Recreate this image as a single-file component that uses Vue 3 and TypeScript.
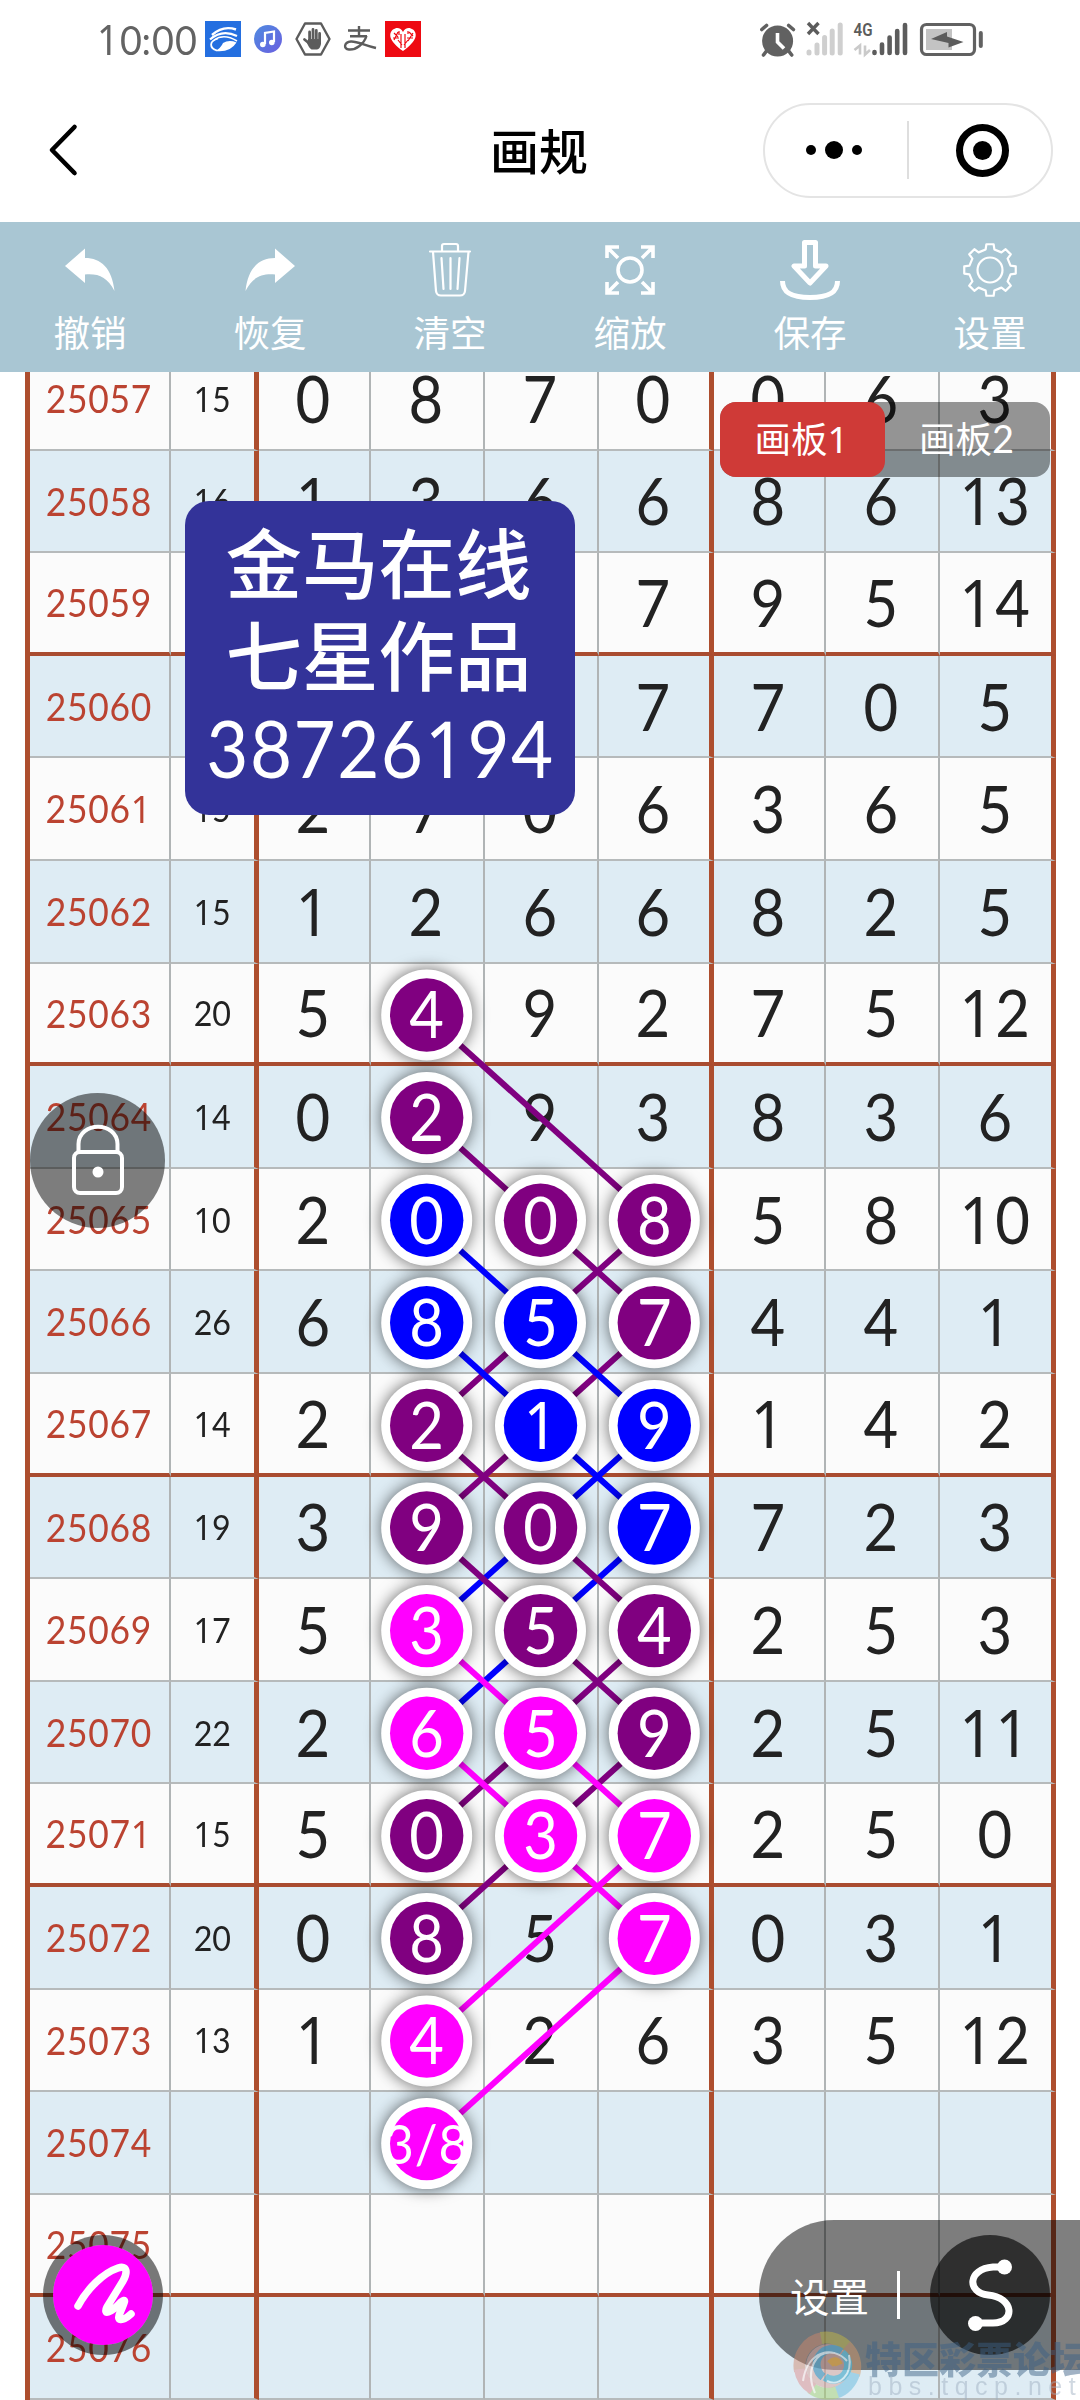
<script setup lang="ts">
interface Row {
  issue: string
  sum: string
  digits: string[]
}

const source: [string, string, string][] = [
  ['25057', '15', '0 8 7 0 0 6 3'],
  ['25058', '16', '1 3 6 6 8 6 13'],
  ['25059', '', '7 9 5 14'],
  ['25060', '', '7 7 0 5'],
  ['25061', '15', '2 7 0 6 3 6 5'],
  ['25062', '15', '1 2 6 6 8 2 5'],
  ['25063', '20', '5 4 9 2 7 5 12'],
  ['25064', '14', '0 2 9 3 8 3 6'],
  ['25065', '10', '2 0 0 8 5 8 10'],
  ['25066', '26', '6 8 5 7 4 4 1'],
  ['25067', '14', '2 2 1 9 1 4 2'],
  ['25068', '19', '3 9 0 7 7 2 3'],
  ['25069', '17', '5 3 5 4 2 5 3'],
  ['25070', '22', '2 6 5 9 2 5 11'],
  ['25071', '15', '5 0 3 7 2 5 0'],
  ['25072', '20', '0 8 5 7 0 3 1'],
  ['25073', '13', '1 4 2 6 3 5 12'],
  ['25074', '', ''],
  ['25075', '', ''],
  ['25076', '', ''],
]

// A board mark covers the digit below it, so those cells stay empty.
const covered = new Set<string>()

const PURPLE = '#800080'
const BLUE = '#0000ff'
const PINK = '#ff00ff'

interface Mark { issue: number; col: number; text: string; color: string }
const marks: Mark[] = [
  [63, 2, '4', PURPLE], [64, 2, '2', PURPLE],
  [65, 2, '0', BLUE], [65, 3, '0', PURPLE], [65, 4, '8', PURPLE],
  [66, 2, '8', BLUE], [66, 3, '5', BLUE], [66, 4, '7', PURPLE],
  [67, 2, '2', PURPLE], [67, 3, '1', BLUE], [67, 4, '9', BLUE],
  [68, 2, '9', PURPLE], [68, 3, '0', PURPLE], [68, 4, '7', BLUE],
  [69, 2, '3', PINK], [69, 3, '5', PURPLE], [69, 4, '4', PURPLE],
  [70, 2, '6', PINK], [70, 3, '5', PINK], [70, 4, '9', PURPLE],
  [71, 2, '0', PURPLE], [71, 3, '3', PINK], [71, 4, '7', PINK],
  [72, 2, '8', PURPLE], [72, 4, '7', PINK],
  [73, 2, '4', PINK], [74, 2, '3/8', PINK],
].map(([issue, col, text, color]) => ({ issue, col, text, color }) as Mark)

for (const m of marks) covered.add(`250${m.issue}-${m.col}`)

const rows: Row[] = source.map(([issue, sum, line]) => {
  const parts = line ? line.split(' ') : []
  const digits = [...Array(7 - parts.length).fill(''), ...parts]
  return { issue, sum, digits: digits.map((d, i) => (covered.has(`${issue}-${i + 1}`) ? '' : d)) }
})

const links: [number, number, number, number, string][] = [
  [65, 4, 66, 3, PURPLE], [66, 3, 67, 2, PURPLE], [66, 4, 67, 3, PURPLE], [67, 3, 68, 2, PURPLE],
  [65, 2, 66, 3, BLUE], [66, 3, 67, 4, BLUE], [66, 2, 67, 3, BLUE], [67, 3, 68, 4, BLUE],
  [67, 4, 68, 3, BLUE], [68, 3, 69, 2, BLUE], [68, 4, 69, 3, BLUE], [69, 3, 70, 2, BLUE],
  [63, 2, 65, 4, PURPLE], [64, 2, 65, 3, PURPLE], [65, 3, 66, 4, PURPLE], [67, 2, 68, 3, PURPLE],
  [68, 3, 69, 4, PURPLE], [68, 2, 69, 3, PURPLE], [69, 3, 70, 4, PURPLE], [69, 4, 70, 3, PURPLE],
  [70, 3, 71, 2, PURPLE], [70, 4, 71, 3, PURPLE], [71, 3, 72, 2, PURPLE],
  [69, 2, 70, 3, PINK], [70, 3, 71, 4, PINK], [70, 2, 71, 3, PINK], [71, 3, 72, 4, PINK],
  [71, 4, 73, 2, PINK], [72, 4, 74, 2, PINK],
]

const px = (col: number) => 426.7 + (col - 2) * 113.8
const py = (issue: number) => 27.4 + (issue - 57) * 102.6

const tools = ['撤销', '恢复', '清空', '缩放', '保存', '设置']
const gearPath = (() => {
  const pts: string[] = []
  const at = (r: number, deg: number) => {
    const a = (deg * Math.PI) / 180
    return `${(30 + r * Math.sin(a)).toFixed(2)} ${(30 - r * Math.cos(a)).toFixed(2)}`
  }
  for (let g = 0; g < 360; g += 45) {
    pts.push(`${at(21, g - 12)} L${at(26, g - 8)} L${at(26, g + 8)} L${at(21, g + 12)}`)
  }
  return `M${pts.join(' L')} Z`
})()
</script>

<template>
  <div class="screen">
    <header class="status">
      <div class="status-left">
        <span class="clock"><span v-for="(c, i) in '10:00'" :key="i" :class="{ one: c === '1' }">{{ c }}</span></span>
        <svg class="app-icon eye" viewBox="0 0 36 36" width="36" height="36">
          <rect width="36" height="36" fill="#246fe0" />
          <g fill="none" stroke="#fff">
            <path d="M7 14 Q18 4 31 8.500" stroke-width="2.400" />
            <path d="M5 18.500 Q17 8 32 15" stroke-width="2.200" />
            <path d="M9 19 Q19 12 32 20" stroke-width="1.500" />
            <path d="M13 17.500 C4 20 4 27 12 29.500" stroke-width="1.800" />
          </g>
          <path d="M10 30 Q16 27 18 22 Q24 18.500 31.500 21.500 Q25 32 10 30Z" fill="#fff" />
        </svg>
        <svg class="app-icon music" viewBox="0 0 28 28" width="28" height="28">
          <defs>
            <linearGradient id="mg" x1="0" y1="0" x2="1" y2="1">
              <stop offset="0" stop-color="#4f8be0" /><stop offset="1" stop-color="#6a5fe0" />
            </linearGradient>
          </defs>
          <circle cx="14" cy="14" r="14" fill="url(#mg)" />
          <path d="M11 19 V8 L20 6.500 V17" fill="none" stroke="#fff" stroke-width="2.200" />
          <circle cx="8.800" cy="19.500" r="2.800" fill="#fff" /><circle cx="17.800" cy="17.500" r="2.800" fill="#fff" />
        </svg>
        <svg class="app-icon hand" viewBox="0 0 36 34" width="36" height="34">
          <path d="M10 1.500 H26 L34.500 17 L26 32.500 H10 L1.500 17Z" fill="none" stroke="#5c5c5c" stroke-width="2.400" stroke-linejoin="round" />
          <g stroke="#5c5c5c" stroke-width="2.800" stroke-linecap="round">
            <path d="M14.600 10 V20 M18 7.500 V20 M21.300 8.500 V20 M24.600 11.500 V20 M9.500 17.500 L15 22" />
          </g>
          <path d="M13.200 17 H26 V22 Q25 27 22 27.500 H16.500 Q14 26 12 21Z" fill="#5c5c5c" />
        </svg>
        <svg class="app-icon pay" viewBox="0 0 34 28" width="34" height="28">
          <g fill="none" stroke="#5c5c5c" stroke-width="2.400">
            <path d="M16 1 V11 M5 5.500 H27 M7 11.200 H24" />
            <path d="M23.500 11 C21 19 13 25 6 24.500 C0 24 1 17 8 16.500 C15 16.300 20 20 33 23" />
          </g>
        </svg>
        <svg class="app-icon heart" viewBox="0 0 36 36" width="36" height="36">
          <rect width="36" height="36" fill="#ee0a12" />
          <path d="M18 30 C4 20 3 13 8 8.500 C12 5.500 16 7 18 11 C20 7 24 5.500 28 8.500 C33 13 32 20 18 30Z" fill="#fff" />
          <path d="M9 12 l4 4 m0 -5 l-4 8 m7 -6 v14 m4 -14 v14 m4 -16 l4 4 m0 -3 l-5 8 m-10 -1 l4 5 m6 -5 l-4 5 M8 17 h6 m8 0 h6 M14 10 v4 m9 -4 v3" stroke="#ee0a12" stroke-width="1.200" fill="none" />
        </svg>
      </div>
      <svg class="status-right" viewBox="760 18 228 42" width="228" height="42">
        <circle cx="777.600" cy="41" r="15.500" fill="#616161" />
        <path d="M777.500 33 V42 L784 48.500" fill="none" stroke="#fff" stroke-width="3.600" />
        <path d="M761.800 29.500 L766.500 25.500 M793.400 29.500 L788.700 25.500 M766.500 51 L763.500 55 M788.700 51 L791.700 55" stroke="#616161" stroke-width="3.600" stroke-linecap="round" />
        <path d="M808 23 L818.500 34 M818.500 23 L808 34" stroke="#5c5c5c" stroke-width="3.400" />
        <g stroke="#cfcfcf" stroke-width="5" stroke-linecap="round">
          <path d="M809 52 V53 M817 45 V53 M824.600 37.500 V53 M832.200 31 V53 M840.200 25 V53" />
        </g>
        <text x="853.500" y="36" font-size="18.500" font-weight="600" textLength="19" lengthAdjust="spacingAndGlyphs" fill="#5c5c5c" class="net">4G</text>
        <path d="M860 54.500 V45.500 L854.500 50 M865 45.500 V54.500 L870 50" fill="none" stroke="#cacaca" stroke-width="2.600" />
        <g stroke="#5c5c5c" stroke-width="4.600" stroke-linecap="round">
          <path d="M874.500 52 V53 M882 44.500 V53 M889.600 37.500 V53 M897.200 31 V53 M905 25 V53" />
        </g>
        <rect x="921.500" y="24.500" width="53" height="30" rx="5" fill="#fff" stroke="#616161" stroke-width="3.200" />
        <rect x="926" y="29" width="26" height="21" fill="#c3c3c3" />
        <path d="M931 39 L947 32 V36.500 L963.500 42 L948.500 47.500 V43Z" fill="#5c5c5c" />
        <path d="M980.800 33 V46" stroke="#616161" stroke-width="4" stroke-linecap="round" />
      </svg>
    </header>

    <nav class="titlebar">
      <svg class="back" viewBox="0 0 34 56" width="34" height="56">
        <path d="M28.500 5 L6 28 L28.500 51" fill="none" stroke="#000" stroke-width="4.600" stroke-linecap="round" stroke-linejoin="round" />
      </svg>
      <h1>画规</h1>
      <div class="capsule">
        <div class="dots"><i /><i class="big" /><i /></div>
        <div class="split" />
        <div class="target"><i /></div>
      </div>
    </nav>

    <div class="toolbar">
      <div v-for="(t, i) in tools" :key="t" class="tool">
        <svg viewBox="0 0 60 60" width="60" height="60">
          <path v-if="i === 0" d="M5 26 L25 8.500 V18 C41 18 52 28 54.500 51 C47 37 39 33.500 25 34.500 V43Z" fill="#fff" />
          <path v-if="i === 1" d="M55 26 L35 8.500 V18 C19 18 8 28 5.500 51 C13 37 21 33.500 35 34.500 V43Z" fill="#fff" />
          <g v-if="i === 2" fill="none" stroke="#fff" stroke-width="2.200" stroke-linecap="round" stroke-linejoin="round">
            <path d="M10 11.500 H50 M22 11 V6 Q22 4 24 4 H36 Q38 4 38 6 V11" />
            <path d="M13 12 L16 51 Q16.500 55.500 21 55.500 H40 Q44.500 55.500 45 51 L48.500 12 M21.500 18 L23.500 49 M30.500 18 V49 M39.500 18 L37.500 49" />
          </g>
          <g v-if="i === 3" fill="none" stroke="#fff" stroke-width="3.600">
            <circle cx="30" cy="30" r="12" />
            <path d="M7 18 V7 H19 M8 8 L18 18 M41 7 H53 V18 M52 8 L42 18 M7 42 V53 H19 M8 52 L18 42 M41 53 H53 V42 M52 52 L42 42" />
          </g>
          <g v-if="i === 4" fill="none" stroke="#fff" stroke-width="5" stroke-linejoin="round">
            <path d="M24.500 2.500 H35.500 V26 H46 L30 43 L14 26 H24.500Z" />
            <path d="M2.500 41 C2.500 53 12 57.500 30 57.500 C48 57.500 57.500 53 57.500 41" />
          </g>
          <g v-if="i === 5" fill="none" stroke="#fff" stroke-width="2.200" stroke-linejoin="round">
            <path :d="gearPath" /><circle cx="30" cy="30" r="12.500" />
          </g>
        </svg>
        <span>{{ t }}</span>
      </div>
    </div>

    <main class="board">
      <div class="table">
        <div v-for="(r, i) in rows" :key="r.issue" class="row" :class="{ alt: i % 2 === 1, block: i % 4 === 2 }">
          <div class="cell issue"><span class="fit"><span v-for="(c, k) in r.issue" :key="k" :class="{ one: c === '1' }">{{ c }}</span></span></div>
          <div class="cell sum"><span class="fit"><span v-for="(c, k) in r.sum" :key="k" :class="{ one: c === '1' }">{{ c }}</span></span></div>
          <div v-for="(d, j) in r.digits" :key="j" class="cell num" :class="'n' + j">
            <span class="fit"><span v-for="(c, k) in d" :key="k" :class="{ one: c === '1' }">{{ c }}</span></span>
          </div>
        </div>
      </div>

      <svg class="drawing" viewBox="0 0 1080 2028" width="1080" height="2028">
        <line
          v-for="(l, i) in links" :key="i"
          :x1="px(l[1])" :y1="py(l[0])" :x2="px(l[3])" :y2="py(l[2])"
          :stroke="l[4]" stroke-width="6"
        />
        <g v-for="m in marks" :key="m.issue + '-' + m.col">
          <circle class="halo" :cx="px(m.col)" :cy="py(m.issue)" r="45.500" fill="#fff" />
          <circle :cx="px(m.col)" :cy="py(m.issue)" r="36.700" :fill="m.color" />
          <text
            :x="px(m.col)" :y="py(m.issue) + (m.text.length > 1 ? 20 : 23.500)"
            text-anchor="middle" fill="#fff" class="mark" :class="{ one: m.text === '1', pair: m.text.length > 1 }"
          >{{ m.text }}</text>
        </g>
      </svg>

      <div class="tabs">
        <div class="tab on">画板<span class="one">1</span></div>
        <div class="tab">画板<span class="lat">2</span></div>
      </div>

      <div class="sign">
        <div>金马在线</div>
        <div>七星作品</div>
        <div class="qq"><span v-for="(c, i) in '38726194'" :key="i" :class="{ one: c === '1' }">{{ c }}</span></div>
      </div>

      <div class="lock">
        <svg viewBox="0 0 54 74" width="54" height="74">
          <g fill="none" stroke="#fff" stroke-width="4">
            <rect x="3" y="28" width="48" height="41" rx="6" />
            <path d="M7.500 28 V20 C8 -3 46 -3 46.500 20 V28" />
          </g>
          <circle cx="27" cy="48" r="5.500" fill="#fff" />
        </svg>
      </div>

      <div class="pen">
        <svg viewBox="0 0 100 100" width="100" height="100">
          <path d="M25 61 C34 44 50 28 65 23 C74 20 75 27 70 36 L54 62 C50 70 57 69 68 57 C75 52 70 60 67 68 C63 76 69 77 78 69" fill="none" stroke="#fff" stroke-width="7.500" stroke-linecap="round" stroke-linejoin="round" />
        </svg>
      </div>

      <div class="dock">
        <span>设置</span>
        <i class="bar" />
        <div class="curve">
          <svg viewBox="0 0 60 80" width="60" height="80">
            <path d="M44 12 H33 C7 14 7 38 28 40 C54 42 56 68 33 68 H16" fill="none" stroke="#fff" stroke-width="7" />
            <circle cx="44.500" cy="12" r="7.500" fill="#fff" /><circle cx="15.500" cy="68.500" r="7.500" fill="#fff" />
          </svg>
        </div>
      </div>

      <div class="watermark">
        <svg viewBox="0 0 70 70" width="70" height="70">
          <g fill="none" stroke-width="12" opacity=".6">
            <path d="M7 40 A28 28 0 0 1 30 7" stroke="#d0876c" />
            <path d="M28 7 A28 28 0 0 1 55 17" stroke="#c6b945" />
            <path d="M53 15 A28 28 0 0 1 61 44" stroke="#d59a68" />
            <path d="M61 42 A28 28 0 0 1 42 62" stroke="#62b8dc" />
            <path d="M44 61 A28 28 0 0 1 18 57" stroke="#a5d36f" />
            <path d="M20 58 A28 28 0 0 1 7 38" stroke="#e08a8a" />
          </g>
          <circle cx="35" cy="35" r="22" fill="#d8a49c" opacity=".65" />
          <g fill="none" stroke-width="8" opacity=".85">
            <path d="M30 46 A14 14 0 0 1 48 21" stroke="#4a9dc4" />
            <path d="M49 22 A14 14 0 0 1 32 46" stroke="#4fb3d3" />
            <path d="M37 33 Q43 27 46 34" stroke="#d8a03c" />
          </g>
          <path d="M10 50 C14 20 40 14 54 30 M22 62 C12 40 22 18 42 22 M34 50 C46 56 60 44 56 24" fill="none" stroke="#fff" stroke-width="2" opacity=".7" />
        </svg>
        <div class="wm-text">
          <b>特区彩票论坛</b>
          <small>bbs.tqcp.net</small>
        </div>
      </div>
    </main>
  </div>
</template>

<style>
html, body { margin: 0; background: #fff; overflow: hidden; }
</style>

<style scoped>
* { box-sizing: border-box; }
.screen {
  width: 1080px; height: 2400px; overflow: hidden; background: #fff;
  display: flex; flex-direction: column;
  font-family: Lato, "Noto Sans CJK SC", sans-serif;
}
.one { font-family: "Noto Sans", sans-serif; }

.status { height: 80px; flex: none; display: flex; justify-content: space-between; padding: 18px 92px 0 96px; }
.status-left { display: flex; height: 42px; align-items: center; }
.clock { font-size: 41px; line-height: 40px; letter-spacing: .6px; color: #636363; width: 109px; white-space: nowrap; padding-top: 1px; }
.clock > span { display: inline-block; transform: scaleX(.92); margin-right: -1.500px; }
.music { margin-left: 13px; }
.hand { margin-left: 13px; }
.pay { margin-left: 12px; }
.heart { margin-left: 8px; }
.net { font-family: Roboto, sans-serif; }

.titlebar { height: 142px; flex: none; display: flex; justify-content: space-between; padding: 22.500px 27px 0 46px; position: relative; }
.back { margin-top: 19px; }
h1 { margin: 0; position: absolute; left: 0; right: 2px; top: 33px; text-align: center; font: 500 49px/72px "Noto Sans CJK SC", sans-serif; color: #000; }
.capsule { width: 290px; height: 95.500px; border: 2px solid #e4e4e4; border-radius: 48px; display: flex; align-items: center; padding: 0 42px 0 41px; justify-content: space-between; }
.dots { display: flex; align-items: center; gap: 9px; }
.dots i { width: 10px; height: 10px; border-radius: 50%; background: #000; }
.dots .big { width: 18px; height: 18px; }
.split { width: 2px; height: 58px; background: #dedede; margin-left: 2px; margin-right: 4px; }
.target { width: 53px; height: 53px; border: 7px solid #000; border-radius: 50%; display: flex; align-items: center; justify-content: center; }
.target i { width: 19px; height: 19px; border-radius: 50%; background: #000; }

.toolbar { height: 150px; flex: none; background: #a9c6d3; display: flex; padding-top: 18px; }
.tool { width: 180px; display: flex; flex-direction: column; align-items: center; color: #fff; }
.tool span { font: 400 36.500px/52px "Noto Sans CJK SC", sans-serif; margin-top: 6px; }

.board { flex: 1; position: relative; overflow: hidden; }
.table { margin: -24px 0 0 25px; width: 1031px; border-left: 5px solid #ad4e2e; }
.row { display: flex; height: 102.600px; background: #fbfbfb; }
.row.alt { background: #deecf4; }
.cell { border-right: 2px solid #b0b4b5; border-bottom: 2px solid #b6babb; display: flex; align-items: center; justify-content: center; line-height: 1; white-space: nowrap; flex: none; }
.fit { display: inline-block; transform: scaleX(.92); }
.row.block .cell { border-bottom: 4px solid #a94c30; }
.issue { width: 141px; font-size: 38.500px; letter-spacing: .8px; color: #bb4331; }
.issue .fit { margin-left: -1px; }
.sum { width: 88px; font-size: 35px; color: #222; border-right: 5px solid #ad4e2e; }
.num { font-size: 65px; letter-spacing: 2px; color: #222; }
.num .fit { margin-left: 0; }
.n0 { width: 112px; }
.n1, .n2 { width: 114px; }
.n3 { width: 115px; border-right: 5px solid #ad4e2e; }
.n4 { width: 112px; }
.n5 { width: 114px; }
.n6 { width: 116px; border-right: 5px solid #ad4e2e; }

.drawing { position: absolute; left: 0; top: 0; }
.halo { filter: drop-shadow(0 0 8px rgba(0, 0, 0, .6)); }
.mark { font-family: Lato, sans-serif; font-size: 65px; transform-box: fill-box; transform-origin: center; transform: scaleX(.92); }
.mark.one { font-family: "Noto Sans", sans-serif; }
.mark.pair { font-size: 55px; letter-spacing: 1px; }

.tabs { position: absolute; left: 720px; top: 30px; width: 330px; height: 75px; border-radius: 16px; background: rgba(0, 0, 0, .41); display: flex; }
.tab { width: 165px; border-radius: 16px; color: #fff; font: 400 36.500px/71px "Noto Sans CJK SC", sans-serif; text-align: center; padding-right: 2px; }
.tab.on { background: #cf3a37; }
.tab .one { font-family: "Noto Sans", sans-serif; }
.tab .lat { font-family: Lato, sans-serif; font-size: 38px; }

.sign { position: absolute; left: 185px; top: 129px; width: 390px; height: 314px; border-radius: 24px; background: #333399; color: #fff; padding-top: 13px; text-align: center; font: 500 76.500px/92px "Noto Sans CJK SC", sans-serif; white-space: nowrap; }
.sign > div { margin-left: -3px; }
.sign .qq { font: 400 79px/92px Lato, sans-serif; letter-spacing: 1.600px; padding-top: 4px; transform: scaleX(.92); margin-left: 1px; }

.lock { position: absolute; left: 30px; top: 721px; width: 135px; height: 135px; border-radius: 50%; background: rgba(0, 0, 0, .5); display: flex; align-items: center; justify-content: center; }
.pen { position: absolute; left: 43px; top: 1863px; width: 120px; height: 120px; border-radius: 50%; border: 10px solid rgba(0, 0, 0, .52); background: #f0f; background-clip: padding-box; }
.dock { position: absolute; left: 759px; top: 1848px; width: 331px; height: 150px; border-radius: 75px 0 0 75px; background: rgba(0, 0, 0, .5); display: flex; align-items: center; padding-left: 31px; color: #fff; }
.dock span { font: 400 39.500px/56px "Noto Sans CJK SC", sans-serif; width: 80px; margin-top: -1px; }
.bar { width: 3px; height: 48px; background: #fff; margin-left: 27px; }
.curve { width: 120px; height: 120px; border-radius: 50%; background: rgba(0, 0, 0, .62); margin-left: 30px; display: flex; align-items: center; justify-content: center; }
.watermark { position: absolute; left: 793px; top: 1959px; display: flex; opacity: .8; }
.wm-text { display: flex; flex-direction: column; margin: 8px 0 0 2px; white-space: nowrap; }
.wm-text b { font: 900 37px/38px "Noto Sans CJK SC", sans-serif; color: #3c6286; opacity: .6; }
.wm-text small { font: 400 25px/24px "Liberation Sans", sans-serif; letter-spacing: 6.500px; color: #9fb0c2; opacity: .6; margin-left: 3px; margin-top: -3px; }
</style>
